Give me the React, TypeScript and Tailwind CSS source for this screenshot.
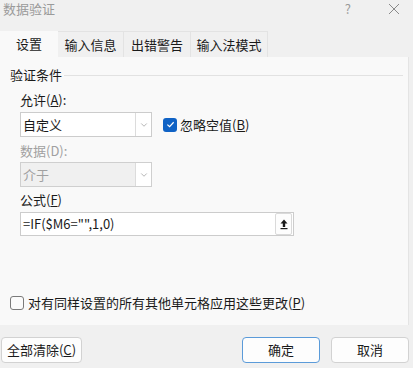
import { ChevronDown } from "lucide-react"

const font = "font-['Microsoft_YaHei_UI','Noto_Sans_CJK_SC',sans-serif]"

function Combo({ value, disabled }: { value: string; disabled?: boolean }) {
  return (
    <div
      className={`flex h-[25px] w-[132px] border ${
        disabled ? "border-[#cfcfcf] bg-[#f0f0f0] text-[#a0a0a0]" : "border-[#cccccc] bg-white text-[#1a1a1a]"
      }`}
    >
      <div className="flex flex-1 items-center pl-[2px]">{value}</div>
      <div className="flex w-[16px] items-center justify-center border-l border-[#dcdcdc] bg-white">
        <ChevronDown className="h-[10px] w-[10px] text-[#8a8a8a]" strokeWidth={1.5} />
      </div>
    </div>
  )
}

export default function App() {
  const tabs = ["设置", "输入信息", "出错警告", "输入法模式"]
  return (
    <div className={`relative h-[368px] w-[413px] overflow-hidden bg-[#f0f0f0] text-[13px] leading-[18px] text-[#1a1a1a] ${font}`}>
      {/* title bar */}
      <div className="flex h-[17px] items-start">
        <span className="ml-[3px] leading-[17px] text-[#9a9a9a]">数据验证</span>
        <span className="ml-auto mr-[37px] leading-[17px] text-[#9a9a9a]">?</span>
        <svg className="mr-[13px] mt-[3px] h-[12px] w-[12px]" viewBox="0 0 12 12">
          <path d="M1 1L11 11M11 1L1 11" stroke="#8a8a8a" strokeWidth="1" />
        </svg>
      </div>

      {/* tabs */}
      <div className="mt-[14px] flex h-[26px] w-[268px]">
        {tabs.map((t, i) => (
          <div
            key={t}
            className={`flex items-center justify-center ${
              i === 0
                ? "w-[58px] bg-[#f9f9f9]"
                : "border-r border-t border-[#e3e3e3] bg-[#f0f0f0] " + (i === 3 ? "w-[77px]" : i === 2 ? "w-[67px]" : "w-[66px]")
            }`}
          >
            {t}
          </div>
        ))}
      </div>

      {/* panel */}
      <div className="h-[268px] w-[409px] border-r border-[#e4e4e4] bg-[#f9f9f9] pt-[9px]">
        <div className="flex items-center pl-[10px] pr-[5px]">
          <span>验证条件</span>
          <div className="ml-[2px] h-px flex-1 bg-[#e2e2e2]" />
        </div>

        <div className="pl-[20px]">
          <div className="mt-[7px]">
            允许(<span className="underline">A</span>):
          </div>
          <div className="mt-[3px] flex items-center">
            <Combo value="自定义" />
            <div className="ml-[11px] flex h-[14px] w-[14px] items-center justify-center rounded-[3px] bg-[#0f62c5]">
              <svg viewBox="0 0 10 10" className="h-[9px] w-[9px]">
                <path d="M1.5 5.2L4 7.5L8.5 2.5" stroke="white" strokeWidth="1.3" fill="none" />
              </svg>
            </div>
            <span className="ml-[3px]">
              忽略空值(<span className="underline">B</span>)
            </span>
          </div>

          <div className="mt-[5px] text-[#a0a0a0]">数据(D):</div>
          <div className="mt-[2px]">
            <Combo value="介于" disabled />
          </div>

          <div className="mt-[4px]">
            公式(<span className="underline">F</span>)
          </div>
          <div className="mt-[3px] flex h-[24px] w-[274px] items-center border border-[#cccccc] bg-white">
            <span className="flex-1 pl-[2px]">=IF($M6="",1,0)</span>
            <div className="mr-px flex h-[22px] w-[17px] items-center justify-center rounded-[2px] border border-[#dadada] bg-[#fdfdfd]">
              <svg viewBox="0 0 10 12" className="h-[12px] w-[10px]">
                <path d="M5 1.5L1.5 5.5H3.8V9H6.2V5.5H8.5Z" fill="#1a1a1a" />
                <rect x="1.5" y="10" width="7" height="1.2" fill="#1a1a1a" />
              </svg>
            </div>
          </div>
        </div>

        <div className="mt-[58px] flex items-center pl-[10px]">
          <div className="h-[14px] w-[14px] rounded-[3px] border border-[#7a7a7a] bg-[#fbfbfb]" />
          <span className="ml-[4px]">
            对有同样设置的所有其他单元格应用这些更改(<span className="underline">P</span>)
          </span>
        </div>
      </div>

      {/* buttons */}
      <div className="mt-[12px] flex">
        <button className="ml-px flex h-[26px] w-[81px] items-center justify-center rounded-[4px] border border-[#d2d2d2] bg-[#fdfdfd]">
          全部清除(<span className="underline">C</span>)
        </button>
        <button className="ml-auto flex h-[26px] w-[78px] items-center justify-center rounded-[4px] border border-[#5b9bd9] bg-[#fdfdfd]">
          确定
        </button>
        <button className="ml-[11px] mr-[4px] flex h-[26px] w-[78px] items-center justify-center rounded-[4px] border border-[#d2d2d2] bg-[#fdfdfd]">
          取消
        </button>
      </div>
    </div>
  )
}
